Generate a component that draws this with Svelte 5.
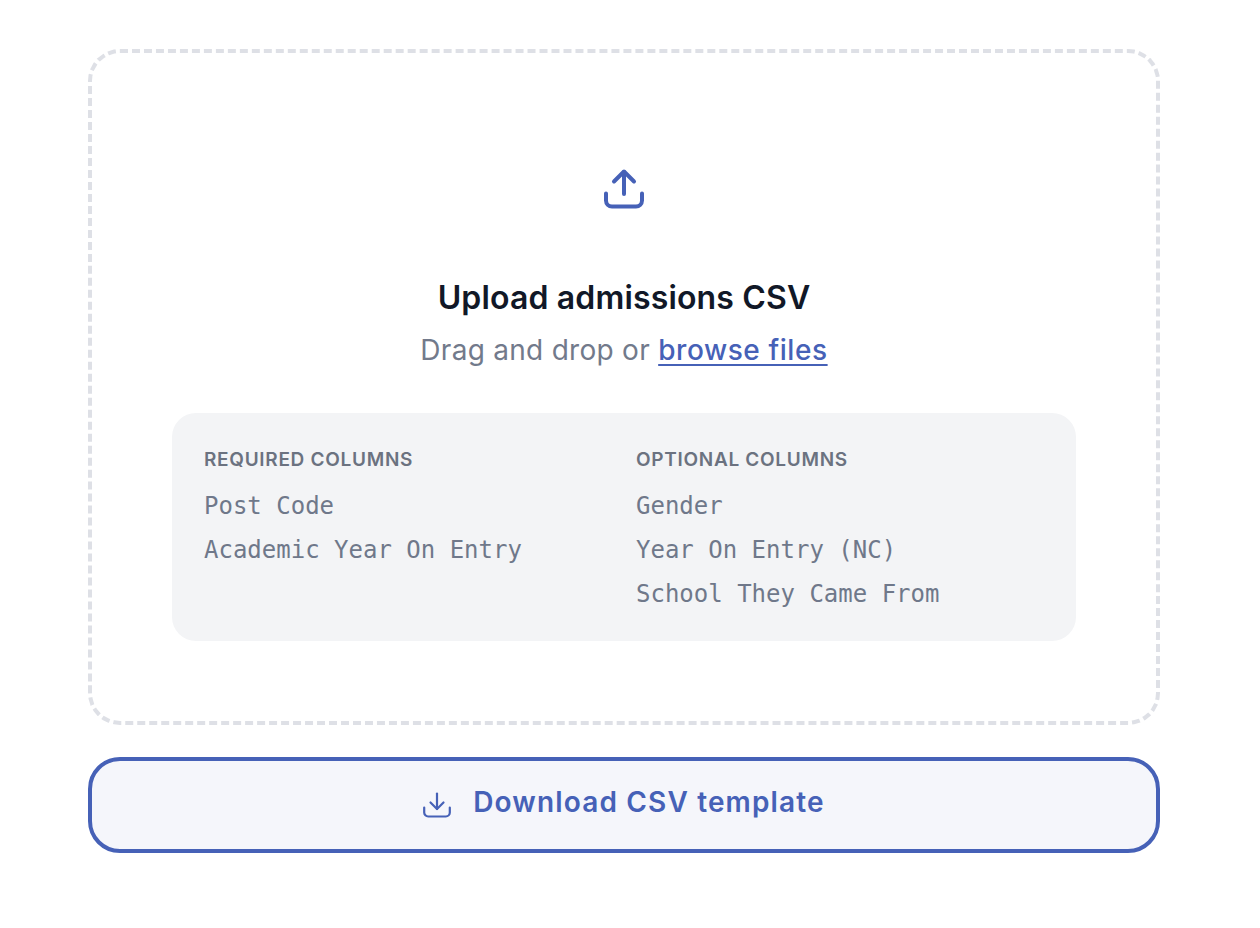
<script>
  const required = ['Post Code', 'Academic Year On Entry'];
  const optional = ['Gender', 'Year On Entry (NC)', 'School They Came From'];
</script>

<div class="page">
  <div class="dropzone">
    <svg class="upload-icon" width="48" height="48" viewBox="0 0 48 48" fill="none" stroke="currentColor" stroke-width="4" stroke-linecap="round" stroke-linejoin="round">
      <path d="M24 28V6" />
      <path d="M14 15.500L24 5.500L34 15.500" />
      <path d="M6 28v7a6 6 0 0 0 6 6h24a6 6 0 0 0 6-6v-7" transform="translate(0 -0.500)" />
    </svg>
    <h2>Upload admissions CSV</h2>
    <p class="hint">Drag and drop or <a href="#browse">browse files</a></p>

    <div class="columns">
      <div>
        <h3>REQUIRED COLUMNS</h3>
        {#each required as col}
          <div class="col-name">{col}</div>
        {/each}
      </div>
      <div>
        <h3>OPTIONAL COLUMNS</h3>
        {#each optional as col}
          <div class="col-name">{col}</div>
        {/each}
      </div>
    </div>
  </div>

  <button class="download">
    <svg width="28" height="26" viewBox="0 0 28 26" fill="none" stroke="currentColor" stroke-width="2.200" stroke-linecap="round" stroke-linejoin="round">
      <path d="M14 1.500V17" />
      <path d="M7.500 10.500L14 17L20.500 10.500" />
      <path d="M1.200 15.500v5a4 4 0 0 0 4 4h17.600a4 4 0 0 0 4-4v-5" />
    </svg>
    <span>Download CSV template</span>
  </button>
</div>

<style>
  :global(body) {
    background: #fff;
  }

  .page {
    width: 1072px;
    padding: 49px 0 0 88px;
    display: flex;
    flex-direction: column;
    gap: 32px;
    font-family: Inter, "Noto Sans", sans-serif;
  }

  .dropzone {
    box-sizing: border-box;
    height: 676px;
    border: 4px dashed #dee0e6;
    border-radius: 32px;
    padding: 113px 80px 0;
    display: flex;
    flex-direction: column;
    align-items: center;
  }

  .upload-icon {
    color: #4661b7;
    flex: none;
  }

  h2 {
    margin: 64px 0 0;
    font-size: 32px;
    line-height: 40px;
    font-weight: 600;
    color: #111827;
    letter-spacing: 0.15px;
  }

  .hint {
    margin: 12px 0 0;
    font-size: 28px;
    line-height: 40px;
    letter-spacing: 0.28px;
    color: #727a8b;
  }

  .hint a {
    color: #4661b7;
    font-weight: 500;
    letter-spacing: 0.57px;
    text-underline-offset: 4px;
  }

  .columns {
    box-sizing: border-box;
    width: 904px;
    height: 228px;
    margin-top: 43px;
    padding: 33px 32px 0;
    background: #f3f4f6;
    border-radius: 24px;
    display: grid;
    grid-template-columns: 1fr 1fr;
    gap: 24px;
  }

  h3 {
    margin: 0 0 10px;
    font-size: 19px;
    line-height: 28px;
    font-weight: 600;
    color: #6b7280;
    letter-spacing: 0.7px;
  }

  .col-name {
    font-family: "DejaVu Sans Mono", monospace;
    font-size: 24px;
    line-height: 44px;
    color: #6f788a;
  }

  .download {
    box-sizing: border-box;
    height: 96px;
    border: 4px solid #4661b7;
    border-radius: 32px;
    background: #f5f6fb;
    color: #4661b7;
    font-family: inherit;
    font-size: 28px;
    font-weight: 600;
    letter-spacing: 1.15px;
    display: flex;
    align-items: center;
    justify-content: center;
    gap: 22px;
  }

  .download span {
    padding-bottom: 6px;
  }
</style>
